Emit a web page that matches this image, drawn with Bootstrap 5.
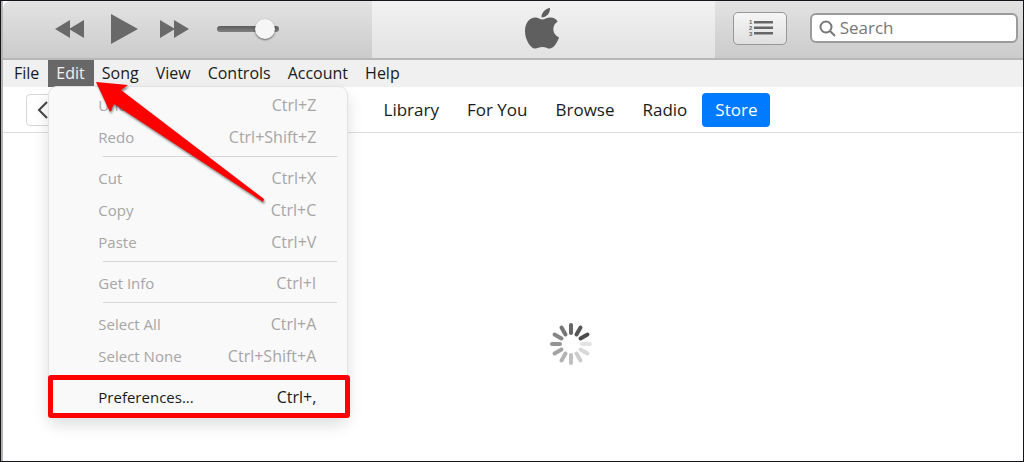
<!DOCTYPE html>
<html lang="en">
<head>
<meta charset="utf-8">
<meta name="viewport" content="width=device-width, initial-scale=1">
<title>iTunes</title>
<link rel="stylesheet" href="https://cdn.jsdelivr.net/npm/bootstrap@5.3.0/dist/css/bootstrap.min.css">
<style>
  body { font-family: "Open Sans", "Noto Sans", sans-serif; font-size: 16px; line-height: 24px; color: #1a1a1a; background: #fff; }
  .app-window { border: 1px solid #17131a; box-shadow: inset 2px 0 #b4b4b4; padding-left: 2px; }
  .player-bar { display: grid; grid-template-columns: 369fr 342fr 308fr; height: 59px; background: linear-gradient(#e3e3e3, #cbcbcb); border-bottom: 2px solid #b7b7b7; border-top-left-radius: 8px; }
  .player-bar button { line-height: 1; }
  .transport { padding: 0 0 2px 52px; gap: 26px; }
  .transport svg, .now-playing svg { fill: #696969; display: block; }
  .transport .forward { margin-left: -4px; }
  .now-playing { background: linear-gradient(#f2f2f2, #e2e2e2); padding: 0 3px 1px 0; }
  .now-playing svg { fill: #5f5f5f; }
  .volume { appearance: none; width: 62px; height: 20px; background: transparent; margin: 0 0 0 1px; }
  .volume::-webkit-slider-runnable-track { height: 6px; border-radius: 3px; background: linear-gradient(#5c5c5c, #808080); }
  .volume::-webkit-slider-thumb { appearance: none; width: 20px; height: 20px; margin-top: -7px; border-radius: 50%; background: #f6f6f6; box-shadow: 0 1px 2px #0008; }
  .tools { padding: 0 5px 3px 18px; gap: 23px; }
  .queue-btn { width: 54px; height: 33px; flex: none; border: 1px solid #979797; border-radius: 5px; background: linear-gradient(#f6f6f6, #dfdfdf); }
  .search-box { height: 30px; border: 2px solid #9b9b9b; border-radius: 6px; background: #fff; padding-left: 7px; gap: 4px; }
  .search-box input { font-size: 17px; line-height: 24px; outline: 0; }
  .search-box input::placeholder { color: #777; opacity: 1; }
  .menu-bar { height: 27px; background: #f0f0f0; padding-left: 3px; }
  .menu-bar > button, .menu-head { height: 27px; padding: 0 9px 2px 8px; line-height: 24px; color: #1a1a1a; }
  .menu-head { background: #686868; color: #f2f2f2; }
  .edit-menu { top: 26px; left: 0; width: 300px; padding: 2px 0 3px; background: #f9f9f9; border: 1px solid #e2e2e2; border-radius: 9px; box-shadow: 0 8px 16px #0002; font-size: 15px; }
  .edit-menu button { height: 32px; padding: 0 31px 1px 49px; color: #1a1a1a; }
  .edit-menu button:disabled { color: #a6a6a6; }
  .edit-menu span + span { font-size: 16px; }
  .edit-menu hr { margin: 3px 10px 5px 54px; border-color: #d6d6d6; opacity: 1; }
  .edit-menu hr.under-marker { visibility: hidden; }
  .marked::after { content: ""; position: absolute; inset: -6px -3px -5px -1px; border: 5px solid #fe0000; border-radius: 3px; }
  .pointer { left: 44px; top: 18px; z-index: 1010; filter: drop-shadow(1px 2px 1px #0007); pointer-events: none; }
  .store-bar { min-height: 46px; border-bottom: 1px solid #dedede; padding-left: 23px; }
  .back-btn { width: 32px; height: 32px; border: 1px solid #d8d8d8; border-radius: 4px; background: #fff; padding: 0 0 0 10px; }
  .tabs { padding-left: 60px; gap: 2px; font-size: 17px; }
  .tabs a { height: 34px; padding: 0 13px; line-height: 34px; color: #1a1a1a; text-decoration: none; border-radius: 4px; }
  .tabs a.active { background: #007aff; color: #fff; }
  .store-page { padding: 189px 0 32px 116px; }
</style>
</head>
<body>
<div class="app-window d-flex flex-column min-vh-100">
  <header class="player-bar">
    <div class="transport d-flex align-items-center">
      <button class="btn p-0 border-0" aria-label="Previous"><svg width="30" height="18"><path d="M15 0v18L0 9zM29 0v18L14 9z"/></svg></button>
      <button class="btn p-0 border-0" aria-label="Play"><svg width="27" height="30"><path d="M0 0l27 15L0 30z"/></svg></button>
      <button class="forward btn p-0 border-0" aria-label="Next"><svg width="30" height="18"><path d="M0 0v18l15-9zM14 0v18l15-9z"/></svg></button>
      <input class="volume" type="range" min="0" max="100" value="90" aria-label="Volume">
    </div>
    <div class="now-playing d-flex align-items-center justify-content-center">
      <svg width="34" height="42" viewBox="0 0 34 42" role="img" aria-label="Apple"><path d="M25 0c.4 5-3.500 9.500-8.500 9.600C16 5 20.500.5 25 0zM17.300 11.600c2 0 4.500-2 8-2 3.200 0 5.800 1.600 7.400 4-6.500 4.200-5.500 13 1.300 15.900-1.500 4.300-5 10.500-8.800 11-2.700.3-4.200-1.600-7.700-1.600s-5 1.600-7.500 1.600C5.500 40.500 0 31.500 0 23.200 0 14.600 5 9.600 10.200 9.600c3 0 5.200 2 7.100 2z"/></svg>
    </div>
    <div class="tools d-flex align-items-center">
      <button class="queue-btn p-0 d-flex align-items-center justify-content-center" aria-label="Up Next">
        <svg width="26" height="18" viewBox="0 0 26 18" fill="#666"><path d="M7 2h19v2.500H7zM7 7.500h19V10H7zM7 13h19v2.500H7z"/><g font-family="Liberation Sans, sans-serif" font-size="6" font-weight="bold"><text x="2" y="5">1</text><text x="2" y="11">2</text><text x="2" y="17">3</text></g></svg>
      </button>
      <label class="search-box d-flex align-items-center flex-grow-1">
        <svg class="flex-shrink-0" width="17" height="17" fill="none" stroke="#777" stroke-width="2"><circle cx="7" cy="7" r="5.500"/><path d="M11 11l5 5"/></svg>
        <input class="border-0 p-0 w-100 bg-transparent" type="search" placeholder="Search" aria-label="Search">
      </label>
    </div>
  </header>

  <nav class="menu-bar d-flex" aria-label="Application menu">
    <button class="border-0 bg-transparent">File</button>
    <div class="position-relative">
      <button class="menu-head border-0" aria-expanded="true">Edit</button>
      <div class="edit-menu dropdown-menu show">
        <button class="dropdown-item d-flex align-items-center justify-content-between" disabled><span>Undo</span><span>Ctrl+Z</span></button>
        <button class="dropdown-item d-flex align-items-center justify-content-between" disabled><span>Redo</span><span>Ctrl+Shift+Z</span></button>
        <hr>
        <button class="dropdown-item d-flex align-items-center justify-content-between" disabled><span>Cut</span><span>Ctrl+X</span></button>
        <button class="dropdown-item d-flex align-items-center justify-content-between" disabled><span>Copy</span><span>Ctrl+C</span></button>
        <button class="dropdown-item d-flex align-items-center justify-content-between" disabled><span>Paste</span><span>Ctrl+V</span></button>
        <hr>
        <button class="dropdown-item d-flex align-items-center justify-content-between" disabled><span>Get Info</span><span>Ctrl+I</span></button>
        <hr>
        <button class="dropdown-item d-flex align-items-center justify-content-between" disabled><span>Select All</span><span>Ctrl+A</span></button>
        <button class="dropdown-item d-flex align-items-center justify-content-between" disabled><span>Select None</span><span>Ctrl+Shift+A</span></button>
        <hr class="under-marker">
        <button class="marked dropdown-item d-flex align-items-center justify-content-between position-relative"><span>Preferences...</span><span>Ctrl+,</span></button>
      </div>
      <svg class="pointer position-absolute" width="180" height="130" fill="#fe0000" aria-hidden="true"><path d="M4 4l32 3-7 5 143 109-1 3L22 26l-4 8z"/></svg>
    </div>
    <button class="border-0 bg-transparent">Song</button>
    <button class="border-0 bg-transparent">View</button>
    <button class="border-0 bg-transparent">Controls</button>
    <button class="border-0 bg-transparent">Account</button>
    <button class="border-0 bg-transparent">Help</button>
  </nav>

  <div class="store-bar d-flex align-items-center">
    <button class="back-btn d-flex align-items-center" aria-label="Back"><svg width="12" height="20" fill="none" stroke="#444" stroke-width="2"><path d="M10 2l-8 8 8 8"/></svg></button>
    <nav class="tabs d-flex flex-grow-1 justify-content-center" aria-label="Store sections">
      <a href="#">Library</a>
      <a href="#">For You</a>
      <a href="#">Browse</a>
      <a href="#">Radio</a>
      <a href="#" class="active" aria-current="page">Store</a>
    </nav>
  </div>

  <main class="store-page flex-grow-1 d-flex justify-content-center align-items-start">
    <svg width="44" height="44" viewBox="-22 -22 44 44" stroke-width="4" stroke-linecap="round" role="img" aria-label="Loading">
      <path stroke="#666" d="M0-11v-8"/>
      <path stroke="#575757" d="M0-11v-8" transform="rotate(30)"/>
      <path stroke="#4c4c4c" d="M0-11v-8" transform="rotate(60)"/>
      <path stroke="#e3e3e3" d="M0-11v-8" transform="rotate(90)"/>
      <path stroke="#d8d8d8" d="M0-11v-8" transform="rotate(120)"/>
      <path stroke="#cdcdcd" d="M0-11v-8" transform="rotate(150)"/>
      <path stroke="#c0c0c0" d="M0-11v-8" transform="rotate(180)"/>
      <path stroke="#b2b2b2" d="M0-11v-8" transform="rotate(210)"/>
      <path stroke="#a3a3a3" d="M0-11v-8" transform="rotate(240)"/>
      <path stroke="#949494" d="M0-11v-8" transform="rotate(270)"/>
      <path stroke="#868686" d="M0-11v-8" transform="rotate(300)"/>
      <path stroke="#757575" d="M0-11v-8" transform="rotate(330)"/>
    </svg>
  </main>
</div>
<script src="https://cdn.jsdelivr.net/npm/bootstrap@5.3.0/dist/js/bootstrap.bundle.min.js"></script>
</body>
</html>
